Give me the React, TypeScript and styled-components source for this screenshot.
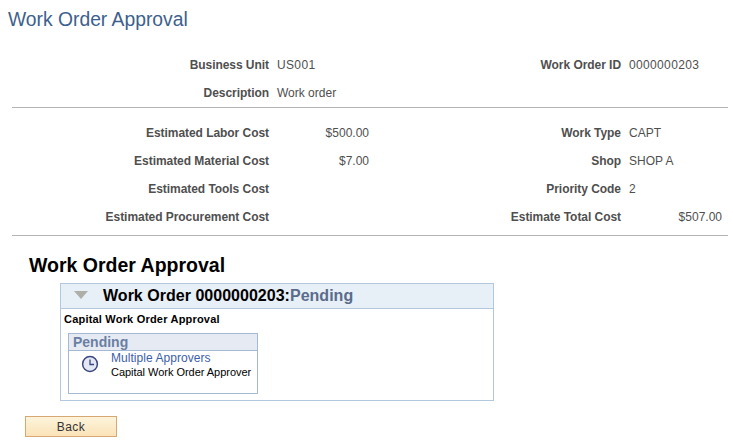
import React from "react";
import styled, { createGlobalStyle } from "styled-components";

const GlobalStyle = createGlobalStyle`
  html, body {
    margin: 0;
    padding: 0;
    background: #ffffff;
    font-family: "Liberation Sans", Arial, sans-serif;
  }
`;

const Page = styled.div`
  width: 733px;
  height: 444px;
  overflow: hidden;
`;

const PageTitle = styled.h1`
  margin: 0;
  padding: 9px 0 0 8px;
  height: 35px;
  font-size: 19.3px;
  line-height: 22px;
  font-weight: normal;
  color: #3d5f8e;
`;

const FieldGrid = styled.div`
  display: grid;
  grid-template-columns: 269px 100px 252px 101px;
  grid-auto-rows: 28px;
  align-items: center;
  font-size: 12px;
`;

const Label = styled.div`
  text-align: right;
  font-weight: bold;
  letter-spacing: -0.05px;
  color: #4f4f4f;
`;

const Value = styled.div<{ $money?: boolean; $digits?: boolean }>`
  color: #4f4f4f;
  padding-left: 8px;
  text-align: ${(p) => (p.$money ? "right" : "left")};
  letter-spacing: ${(p) => (p.$digits ? "0.35px" : "0")};
  white-space: nowrap;
`;

const Rule = styled.hr`
  margin: 0 5px 0 12px;
  border: 0;
  border-top: 1px solid #b5b5b5;
  height: 0;
`;

const TopFields = styled(FieldGrid)`
  padding-top: 7px;
`;

const CostFields = styled(FieldGrid)`
  padding-top: 11px;
  padding-bottom: 4px;
`;

const SectionTitle = styled.h2`
  margin: 0;
  padding: 18px 0 0 29px;
  height: 29px;
  font-size: 19.5px;
  line-height: 22px;
  font-weight: bold;
  color: #000000;
`;

const ApprovalBox = styled.div`
  margin-left: 60px;
  width: 432px;
  height: 116px;
  border: 1px solid #b3c8de;
`;

const ApprovalHeader = styled.div`
  display: flex;
  align-items: center;
  height: 24px;
  background: #e7eff7;
  border-bottom: 1px solid #b3c8de;
  font-size: 16px;
  letter-spacing: 0.02px;
  font-weight: bold;
  color: #000000;
`;

const Arrow = styled.svg`
  width: 14px;
  height: 8px;
  margin: 0 15px 3px 13px;
  flex: none;
`;

const StatusText = styled.span`
  color: #5a6b8c;
`;

const ApprovalName = styled.div`
  padding: 3px 0 0 3px;
  height: 21px;
  font-size: 11px;
  line-height: 14px;
  letter-spacing: 0.2px;
  font-weight: bold;
  color: #000000;
`;

const StageBox = styled.div`
  margin: 0 0 0 7px;
  width: 188px;
  height: 59px;
  border: 1px solid #a5b9d5;
`;

const StageHeader = styled.div`
  height: 16px;
  line-height: 16px;
  padding-left: 4px;
  background: #e6ebf3;
  border-bottom: 1px solid #a5b9d5;
  font-size: 14px;
  font-weight: bold;
  color: #6a7fa3;
`;

const StageRow = styled.div`
  display: flex;
  padding-left: 12px;
`;

const ClockIcon = styled.svg`
  width: 18px;
  height: 18px;
  margin-top: 4px;
  flex: none;
`;

const StageText = styled.div`
  margin-left: 12px;
  font-size: 11px;
  letter-spacing: -0.03px;
  white-space: nowrap;
`;

const ApproverLink = styled.div`
  font-size: 12px;
  line-height: 14px;
  letter-spacing: 0.05px;
  color: #3c5ea8;
`;

const ApproverRole = styled.div`
  line-height: 15px;
  color: #000000;
`;

const BackButton = styled.button`
  display: block;
  margin: 15px 0 0 25px;
  width: 92px;
  height: 21px;
  padding: 0;
  border: 1px solid #d8a873;
  background: linear-gradient(#fdf4dc, #fbe3b8);
  font-family: "Liberation Sans", Arial, sans-serif;
  font-size: 12px;
  letter-spacing: 0.4px;
  color: #333333;
`;

export default function App() {
  return (
    <Page>
      <GlobalStyle />
      <PageTitle>Work Order Approval</PageTitle>
      <TopFields>
        <Label>Business Unit</Label>
        <Value $digits>US001</Value>
        <Label>Work Order ID</Label>
        <Value $digits>0000000203</Value>
        <Label>Description</Label>
        <Value>Work order</Value>
      </TopFields>
      <Rule />
      <CostFields>
        <Label>Estimated Labor Cost</Label>
        <Value $money>$500.00</Value>
        <Label>Work Type</Label>
        <Value>CAPT</Value>
        <Label>Estimated Material Cost</Label>
        <Value $money>$7.00</Value>
        <Label>Shop</Label>
        <Value>SHOP A</Value>
        <Label>Estimated Tools Cost</Label>
        <Value />
        <Label>Priority Code</Label>
        <Value>2</Value>
        <Label>Estimated Procurement Cost</Label>
        <Value />
        <Label>Estimate Total Cost</Label>
        <Value $money>$507.00</Value>
      </CostFields>
      <Rule />
      <SectionTitle>Work Order Approval</SectionTitle>
      <ApprovalBox>
        <ApprovalHeader>
          <Arrow viewBox="0 0 14 8">
            <polygon points="0,0 14,0 7,8" fill="#aeb0a8" />
          </Arrow>
          <span>
            Work Order 0000000203:<StatusText>Pending</StatusText>
          </span>
        </ApprovalHeader>
        <ApprovalName>Capital Work Order Approval</ApprovalName>
        <StageBox>
          <StageHeader>Pending</StageHeader>
          <StageRow>
            <ClockIcon viewBox="0 0 18 18">
              <circle cx="9" cy="9" r="7.4" fill="#e4e8f4" stroke="#3a4680" strokeWidth="1.5" />
              <path d="M9 4.5V9.5H13" fill="none" stroke="#3a4680" strokeWidth="1.3" />
            </ClockIcon>
            <StageText>
              <ApproverLink>Multiple Approvers</ApproverLink>
              <ApproverRole>Capital Work Order Approver</ApproverRole>
            </StageText>
          </StageRow>
        </StageBox>
      </ApprovalBox>
      <BackButton>Back</BackButton>
    </Page>
  );
}
